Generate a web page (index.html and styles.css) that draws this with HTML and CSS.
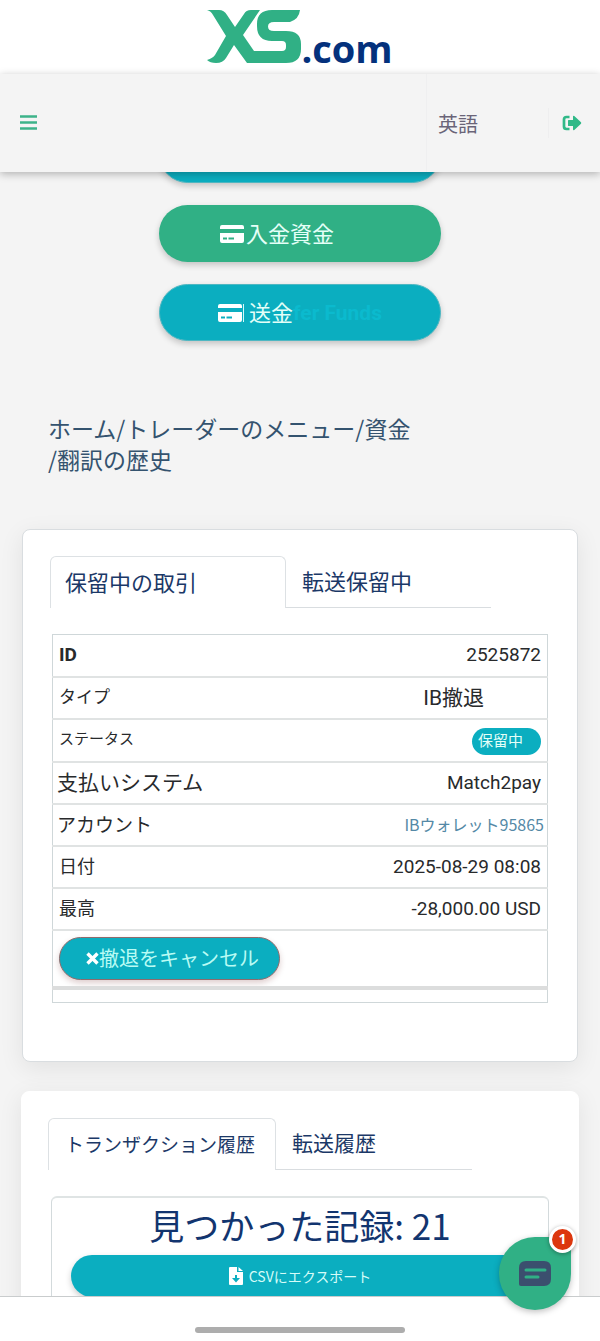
FILE: index.html
```html
<!DOCTYPE html>
<html lang="ja">
<head>
<meta charset="utf-8">
<meta name="viewport" content="width=device-width, initial-scale=1">
<title>XS.com</title>
<link rel="stylesheet" href="styles.css">
</head>
<body>
<div class="app">
  <a class="brand" href="#">
    <svg class="brand-mark" viewBox="0 0 94 53" aria-hidden="true">
      <path fill="#30b085" d="M0 0H12Q17 0 20 5L28 17 37 4Q39 0 44 0H53L36 25 47 41H75Q79 41 79 37V35Q79 31 75 31H65Q50 31 50 16V14Q50 0 65 0H93Q92 9 83 12H67Q61 12 61 16.500Q61 21 67 21H79Q94 21 94 34V39Q94 53 79 53H40L27 35 19 48Q16 53 9 53Q3 53 0 50Q6 48 8 45L19 26 6 5Q4 1 0 0Z"/>
    </svg>
    <span class="brand-text">.com</span>
  </a>
  <header class="topbar">
    <button class="icon-button" aria-label="メニュー">
      <svg width="18" height="16" viewBox="0 0 18 16" aria-hidden="true"><path d="M0 1.500H17M0 7.500H17M0 13.500H17" stroke="#3db389" stroke-width="2.600"/></svg>
    </button>
    <nav class="topbar-side">
      <a class="language" href="#">英語</a>
      <button class="icon-button logout" aria-label="ログアウト">
        <svg width="20" height="16" viewBox="0 0 20 16" aria-hidden="true"><path d="M7.500 2H4.500Q2 2 2 4.500V11.500Q2 14 4.500 14H7.500" fill="none" stroke="#30b988" stroke-width="2.700"/><path fill="#30b988" d="M6 5.500Q6 5 6.600 5H11V1.200Q11.300.3 12.300 1L19 7.300Q19.500 8 19 8.700L12.300 15Q11.300 15.600 11 14.600V11H6.600Q6 11 6 10.400Z"/></svg>
      </button>
    </nav>
  </header>

  <main class="content">
    <div class="actions">
      <button class="pill teal" aria-label="資金"></button>
      <button class="pill green">
        <svg class="card-icon" viewBox="0 0 24 18" aria-hidden="true"><path fill="#fff" fill-rule="evenodd" d="M2 0H22Q24 0 24 2V4H0V2Q0 0 2 0ZM0 8H24V16Q24 18 22 18H2Q0 18 0 16ZM3 12.500V14.500H7V12.500ZM8.500 12.500V14.500H14V12.500Z"/></svg>
        <span class="label">入金資金</span>
      </button>
      <button class="pill teal">
        <svg class="card-icon" viewBox="0 0 24 18" aria-hidden="true"><path fill="#fff" fill-rule="evenodd" d="M2 0H22Q24 0 24 2V4H0V2Q0 0 2 0ZM0 8H24V16Q24 18 22 18H2Q0 18 0 16ZM3 12.500V14.500H7V12.500ZM8.500 12.500V14.500H14V12.500Z"/></svg>
        <span class="bar"></span>
        <span class="label">送金</span><span class="faint">fer Funds</span>
      </button>
    </div>

    <nav class="breadcrumb"><a href="#">ホーム</a>/<a href="#">トレーダーのメニュー</a>/<a href="#">資金</a><br>/<a href="#">翻訳の歴史</a></nav>

    <section class="card">
      <div class="tabs">
        <button class="tab active">保留中の取引</button>
        <button class="tab">転送保留中</button>
      </div>
      <table class="details">
        <tbody>
          <tr><th class="strong" scope="row">ID</th><td>2525872</td></tr>
          <tr><th class="small" scope="row">タイプ</th><td class="type">IB撤退</td></tr>
          <tr><th class="tiny" scope="row">ステータス</th><td><span class="status">保留中</span></td></tr>
          <tr><th class="large" scope="row">支払いシステム</th><td>Match2pay</td></tr>
          <tr><th class="medium" scope="row">アカウント</th><td class="account"><a href="#">IBウォレット95865</a></td></tr>
          <tr><th scope="row">日付</th><td>2025-08-29 08:08</td></tr>
          <tr><th scope="row">最高</th><td>-28,000.00 USD</td></tr>
          <tr class="action-row"><td colspan="2">
            <button class="cancel"><svg width="13" height="13" viewBox="0 0 13 13" aria-hidden="true"><path d="M1.500 1.500L11.500 11.500M11.500 1.500L1.500 11.500" stroke="#fff" stroke-width="3.400"/></svg>撤退をキャンセル</button>
          </td></tr>
          <tr class="end-row"><td colspan="2"></td></tr>
        </tbody>
      </table>
    </section>

    <section class="card history">
      <div class="tabs">
        <button class="tab active">トランザクション履歴</button>
        <button class="tab">転送履歴</button>
      </div>
      <div class="records">
        <h2>見つかった記録: 21</h2>
        <button class="export">
          <svg width="14" height="18" viewBox="0 0 14 18" aria-hidden="true"><path fill="#fff" fill-rule="evenodd" d="M1 0H8V5H14V17Q14 18 13 18H1Q0 18 0 17V1Q0 0 1 0ZM6 8V11H3L7 15.500 11 11H8V8ZM9.500 0L14 4H9.500Z"/></svg>
          CSVにエクスポート
        </button>
      </div>
    </section>
  </main>

  <footer class="system-bar"><span class="handle"></span></footer>

  <button class="chat" aria-label="チャット">
    <svg width="32" height="26" viewBox="0 0 32 26" aria-hidden="true"><path fill="#3b4f6e" d="M7 0H25Q32 0 32 7V18Q32 25 25 25H2Q0 25 0 23V7Q0 0 7 0Z"/><path d="M7 9H26M7 16H19" stroke="#30b085" stroke-width="3" stroke-linecap="round"/></svg>
    <span class="badge">1</span>
  </button>
</div>
</body>
</html>
```

FILE: styles.css
```css
* { box-sizing: border-box; }

body {
  margin: 0;
  background: #f4f4f4;
  color: #282a2c;
  font-family: Roboto, "Noto Sans CJK JP", sans-serif;
}

button {
  margin: 0;
  padding: 0;
  border: 0;
  background: none;
  color: inherit;
  font: inherit;
}

a { color: inherit; text-decoration: none; }
svg { display: block; flex: none; }

.app {
  position: relative;
  display: flex;
  flex-direction: column;
  height: 100vh;
}

.brand {
  display: flex;
  flex: none;
  align-items: flex-end;
  justify-content: center;
  height: 74px;
  padding-bottom: 11px;
  background: #fff;
}

.brand-mark { width: 94px; height: 53px; }

.brand-text {
  color: #04317c;
  font: bold 38px/30px "Open Sans", sans-serif;
}

.topbar {
  z-index: 1;
  display: flex;
  flex: none;
  justify-content: space-between;
  height: 98px;
  padding: 0 18px 0 20px;
  background: #f4f4f4;
  box-shadow: 0 2px 8px rgba(0, 0, 0, 0.28);
}

.icon-button { display: flex; align-items: center; }

.topbar-side {
  display: flex;
  align-items: center;
  justify-content: space-between;
  width: 156px;
  padding-left: 11px;
  border-left: 1px solid #efeff0;
}

.language {
  color: #6a6478;
  font-family: "Noto Sans CJK JP", sans-serif;
  font-size: 20px;
}

.logout {
  height: 30px;
  padding-left: 13px;
  border-left: 1px solid #eeeeef;
}

.content {
  display: flex;
  flex: 1;
  flex-direction: column;
  min-height: 0;
  overflow: hidden;
  font-family: "Noto Sans CJK JP", sans-serif;
}

.actions {
  display: flex;
  flex: none;
  flex-direction: column;
  align-items: center;
  gap: 22px;
  margin-top: -46px;
}

.pill {
  display: flex;
  align-items: center;
  width: 47%;
  height: 57px;
  padding-left: 60px;
  border: 1px solid transparent;
  border-radius: 29px;
  box-shadow: 0 3px 6px rgba(0, 0, 0, 0.2);
  color: #e4fff8;
  font-size: 22px;
  white-space: nowrap;
}

.teal {
  padding-left: 58px;
  border-color: #4eb7c2;
  background: #0baec0;
}

.green { gap: 2px; background: #30b085; }
.label { padding-bottom: 4px; }
.card-icon { width: 24px; height: 18px; }
.bar { width: 1px; height: 18px; margin: 0 5px 0 1px; background: #d5fafa; }

.faint {
  color: #0bbace;
  font-family: Roboto, sans-serif;
  font-size: 21px;
  font-weight: bold;
}

.breadcrumb {
  flex: none;
  margin: 72px 48px 54px;
  color: #34536f;
  font-size: 23px;
  line-height: 31px;
}

.card {
  flex: none;
  margin: 0 22px;
  padding: 26px 27px 58px;
  border: 1px solid #d9dde0;
  border-radius: 8px;
  background: #fff;
  box-shadow: 0 6px 24px rgba(0, 0, 0, 0.08);
}

.tabs { display: flex; }

.tab {
  width: 205px;
  height: 52px;
  padding: 0 16px 3px;
  border-bottom: 1px solid #d9dde0;
  color: #1b3867;
  font-size: 22px;
  text-align: left;
  white-space: nowrap;
}

.tab.active {
  width: 236px;
  padding: 0 14px 4px;
  border: 1px solid #dde1e4;
  border-bottom: 0;
  border-radius: 6px 6px 0 0;
}

.details {
  width: calc(100% - 4px);
  margin: 26px 2px 0;
  border: 1px solid #cfd7d9;
  border-collapse: collapse;
  font-size: 18px;
  line-height: 24px;
}

.details tr { height: 42px; border-bottom: 2px solid #e0e3e3; }

.details th {
  padding: 0 6px 4px;
  font-weight: normal;
  text-align: left;
  white-space: nowrap;
}

.details td {
  padding: 0 6px;
  font-family: Roboto, "Noto Sans CJK JP", sans-serif;
  font-size: 19px;
  text-align: right;
}

.details .strong {
  padding-bottom: 0;
  font-family: Roboto, sans-serif;
  font-size: 19px;
  font-weight: bold;
}

.details .tiny { padding-bottom: 4px; font-size: 15px; }
.details .small { font-size: 17px; }
.details .medium { padding: 0 4px 2px; font-size: 19px; }
.details .large { padding-left: 4px; font-size: 21px; }

.details .type { padding-right: 63px; font-size: 21px; }

.details .account {
  padding: 0 3px 2px;
  color: #5489a6;
  font-family: "Noto Sans CJK JP", sans-serif;
  font-size: 16px;
}

.status {
  display: inline-block;
  width: 69px;
  margin: 8px 0 6px;
  padding-left: 6px;
  border-radius: 14px;
  background: #0baec0;
  color: #e4fff8;
  font-size: 15px;
  line-height: 27px;
  text-align: left;
  vertical-align: middle;
}

.details .action-row { height: 58px; border-bottom: 4px solid #dcdddd; }
.details .action-row td { text-align: left; }
.details .end-row { height: 15px; border-bottom: 0; }

.cancel {
  display: flex;
  align-items: center;
  width: 221px;
  height: 43px;
  padding-left: 26px;
  border: 1px solid #8f6b6c;
  border-radius: 22px;
  background: #0baec0;
  box-shadow: 0 3px 6px rgba(90, 0, 0, 0.2);
  color: #b9fbf4;
  font-family: "Noto Sans CJK JP", sans-serif;
  font-size: 20px;
  white-space: nowrap;
}

.history {
  margin: 29px 21px 0;
  padding: 26px 26px 0;
  border-color: #fff;
}

.history .tab { width: 196px; font-size: 21px; }
.history .tab.active { width: 228px; padding: 0 16px 2px; font-size: 19px; }

.records {
  margin: 26px 3px 0;
  padding: 6px 19px 20px;
  border: 1px solid #d3dadc;
  border-top: 2px solid #dfe4e4;
  border-radius: 6px;
}

.records h2 {
  margin: 0;
  color: #12356f;
  font-size: 35px;
  font-weight: normal;
  line-height: 42px;
  text-align: center;
}

.export {
  display: flex;
  align-items: center;
  justify-content: center;
  gap: 6px;
  width: 100%;
  height: 42px;
  margin-top: 9px;
  border-radius: 21px;
  background: #0baec0;
  box-shadow: 0 3px 6px rgba(0, 0, 0, 0.2);
  color: #d5fcf8;
  font-size: 14px;
}

.system-bar {
  z-index: 1;
  display: flex;
  flex: none;
  justify-content: center;
  height: 45px;
  padding-top: 30px;
  border-top: 1px solid #c9cccd;
  background: #fff;
}

.handle { width: 35%; height: 6px; border-radius: 3px; background: #adadad; }

.chat {
  position: absolute;
  right: 29px;
  bottom: 31px;
  z-index: 2;
  display: grid;
  place-items: center;
  width: 72px;
  height: 73px;
  border-radius: 36px 8px 36px 36px;
  background: #30b085;
  box-shadow: 0 2px 6px rgba(0, 0, 0, 0.25);
}

.badge {
  position: absolute;
  top: -11px;
  right: -5px;
  width: 27px;
  height: 27px;
  border: 3px solid #fff;
  border-radius: 50%;
  background: #dc370e;
  box-shadow: 0 1px 4px rgba(0, 0, 0, 0.35);
  color: #fff;
  font: bold 14px/20px "Open Sans", sans-serif;
}
```
